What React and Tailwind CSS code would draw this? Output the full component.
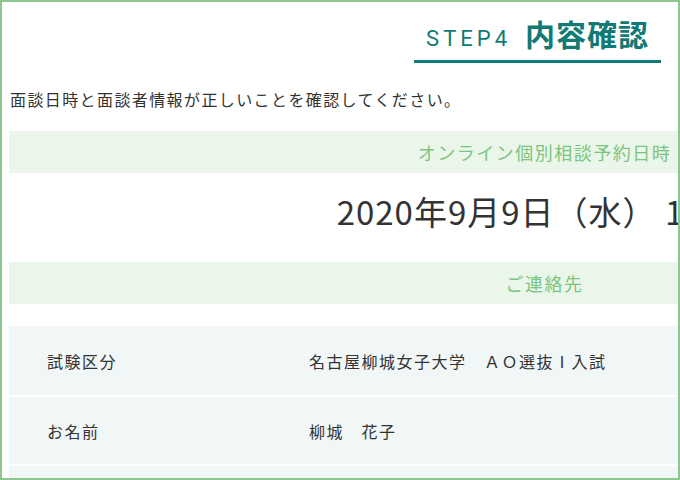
import React from 'react';

const rows = [
  { label: '試験区分', value: '名古屋柳城女子大学　ＡＯ選抜Ⅰ入試' },
  { label: 'お名前', value: '柳城　花子' },
  { label: 'フリガナ', value: 'ヤナギシロ　ハナコ' },
];

const SectionBand = ({ children }) => (
  <div className="h-[42px] flex items-center justify-center bg-[#ebf6ea] text-[18px] tracking-[1.5px] text-[#7cc57f]">
    {children}
  </div>
);

const App = () => {
  return (
    <div
      className="w-[680px] h-[480px] border-2 border-[#8dc68e] bg-white overflow-hidden text-[#333333]"
      style={{ fontFamily: '"Noto Sans CJK JP", "Noto Sans", sans-serif' }}
    >
      <header className="flex justify-end pr-[17px] pt-[13px]">
        <h1 className="flex items-baseline gap-[14px] px-3 pb-[5px] border-b-[3px] border-[#127a74] text-[#127a74]">
          <span className="text-[22px] font-normal tracking-[4px]" style={{ fontFamily: 'Roboto, "Noto Sans", sans-serif' }}>
            STEP4
          </span>
          <span className="text-[30px] leading-[36px] font-bold tracking-[1px]">内容確認</span>
        </h1>
      </header>

      <p className="mt-[24px] pl-[8px] text-base leading-6 tracking-[1.4px]">
        面談日時と面談者情報が正しいことを確認してください。
      </p>

      <div className="mt-[20px] pl-[7px]">
        <div className="w-[1071px]">
          <SectionBand>オンライン個別相談予約日時</SectionBand>

          <div className="h-[89px] flex items-center justify-center pb-[12px] text-[33px] tracking-[1px] text-[#333333]">
            2020年9月9日（水） 13:00
          </div>

          <SectionBand>ご連絡先</SectionBand>

          <dl className="mt-[22px] bg-[#f1f7f7]">
            {rows.map((row, i) => (
              <div
                key={row.label}
                className={`flex items-center h-[69px] text-base tracking-[1.5px] ${i > 0 ? 'border-t-2 border-white' : ''}`}
              >
                <dt className="w-[300px] pl-[38px]">{row.label}</dt>
                <dd>{row.value}</dd>
              </div>
            ))}
          </dl>
        </div>
      </div>
    </div>
  );
};

export default App;
